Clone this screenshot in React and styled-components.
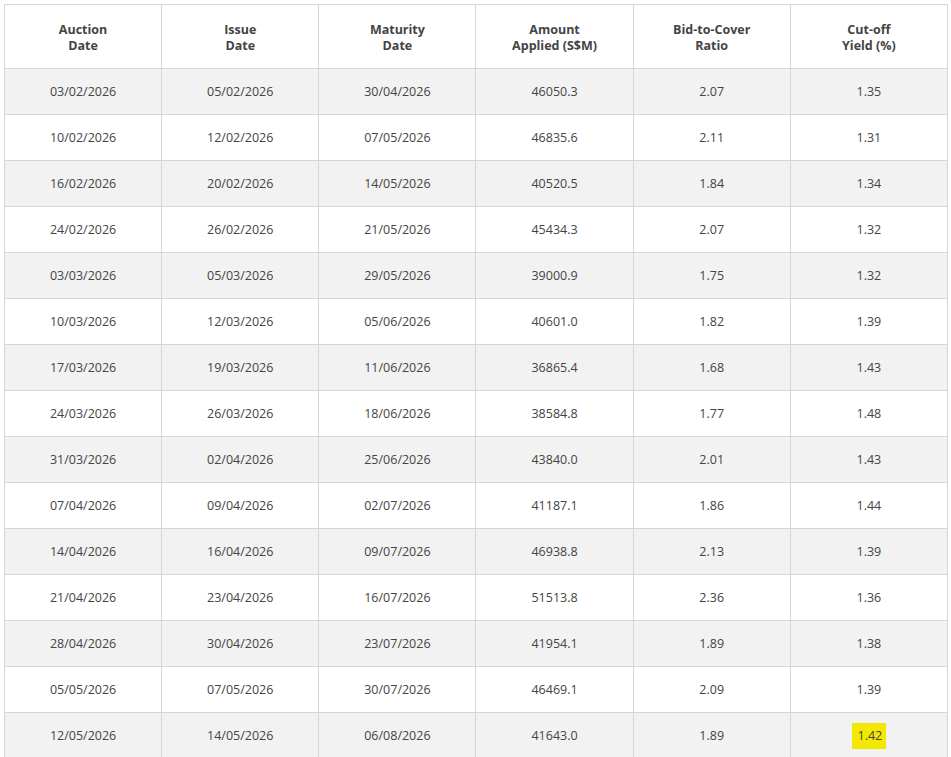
import React from 'react';
import styled, { createGlobalStyle } from 'styled-components';

const Global = createGlobalStyle`
  body { margin: 0; padding: 4px; background: #fff; font-family: "Open Sans", "Noto Sans", sans-serif; }
`;

const Table = styled.table`
  width: 944px;
  border-collapse: collapse;
  table-layout: fixed;
  color: #444;
  font-size: 12.5px;
`;

const Th = styled.th`
  height: 61px;
  border: 1px solid #d6d6d6;
  font-weight: 700;
  line-height: 16px;
  text-align: center;
  vertical-align: middle;
  padding: 2px 10px 0;
  color: #444;
`;

const Tr = styled.tr`
  background: ${p => (p.$shade ? '#f2f2f2' : '#fff')};
`;

const Td = styled.td`
  height: 45px;
  border: 1px solid #d6d6d6;
  text-align: center;
  vertical-align: middle;
  padding: 0;
`;

const Mark = styled.span`
  background: #f2e800;
  padding: 4px 4px 5px 6px;
`;

const headers = [
  ['Auction', 'Date'], ['Issue', 'Date'], ['Maturity', 'Date'],
  ['Amount', 'Applied (S$M)'], ['Bid-to-Cover', 'Ratio'], ['Cut-off', 'Yield (%)'],
];

const rows = [
  ['03/02/2026', '05/02/2026', '30/04/2026', '46050.3', '2.07', '1.35'],
  ['10/02/2026', '12/02/2026', '07/05/2026', '46835.6', '2.11', '1.31'],
  ['16/02/2026', '20/02/2026', '14/05/2026', '40520.5', '1.84', '1.34'],
  ['24/02/2026', '26/02/2026', '21/05/2026', '45434.3', '2.07', '1.32'],
  ['03/03/2026', '05/03/2026', '29/05/2026', '39000.9', '1.75', '1.32'],
  ['10/03/2026', '12/03/2026', '05/06/2026', '40601.0', '1.82', '1.39'],
  ['17/03/2026', '19/03/2026', '11/06/2026', '36865.4', '1.68', '1.43'],
  ['24/03/2026', '26/03/2026', '18/06/2026', '38584.8', '1.77', '1.48'],
  ['31/03/2026', '02/04/2026', '25/06/2026', '43840.0', '2.01', '1.43'],
  ['07/04/2026', '09/04/2026', '02/07/2026', '41187.1', '1.86', '1.44'],
  ['14/04/2026', '16/04/2026', '09/07/2026', '46938.8', '2.13', '1.39'],
  ['21/04/2026', '23/04/2026', '16/07/2026', '51513.8', '2.36', '1.36'],
  ['28/04/2026', '30/04/2026', '23/07/2026', '41954.1', '1.89', '1.38'],
  ['05/05/2026', '07/05/2026', '30/07/2026', '46469.1', '2.09', '1.39'],
  ['12/05/2026', '14/05/2026', '06/08/2026', '41643.0', '1.89', '1.42'],
];

export default function App() {
  return (
    <>
      <Global />
      <Table>
        <thead>
          <tr>
            {headers.map(([a, b]) => (
              <Th key={a}>{a}<br />{b}</Th>
            ))}
          </tr>
        </thead>
        <tbody>
          {rows.map((r, i) => (
            <Tr key={i} $shade={i % 2 === 0}>
              {r.map((c, j) => (
                <Td key={j}>
                  {i === rows.length - 1 && j === 5 ? <Mark>{c}</Mark> : c}
                </Td>
              ))}
            </Tr>
          ))}
        </tbody>
      </Table>
    </>
  );
}
